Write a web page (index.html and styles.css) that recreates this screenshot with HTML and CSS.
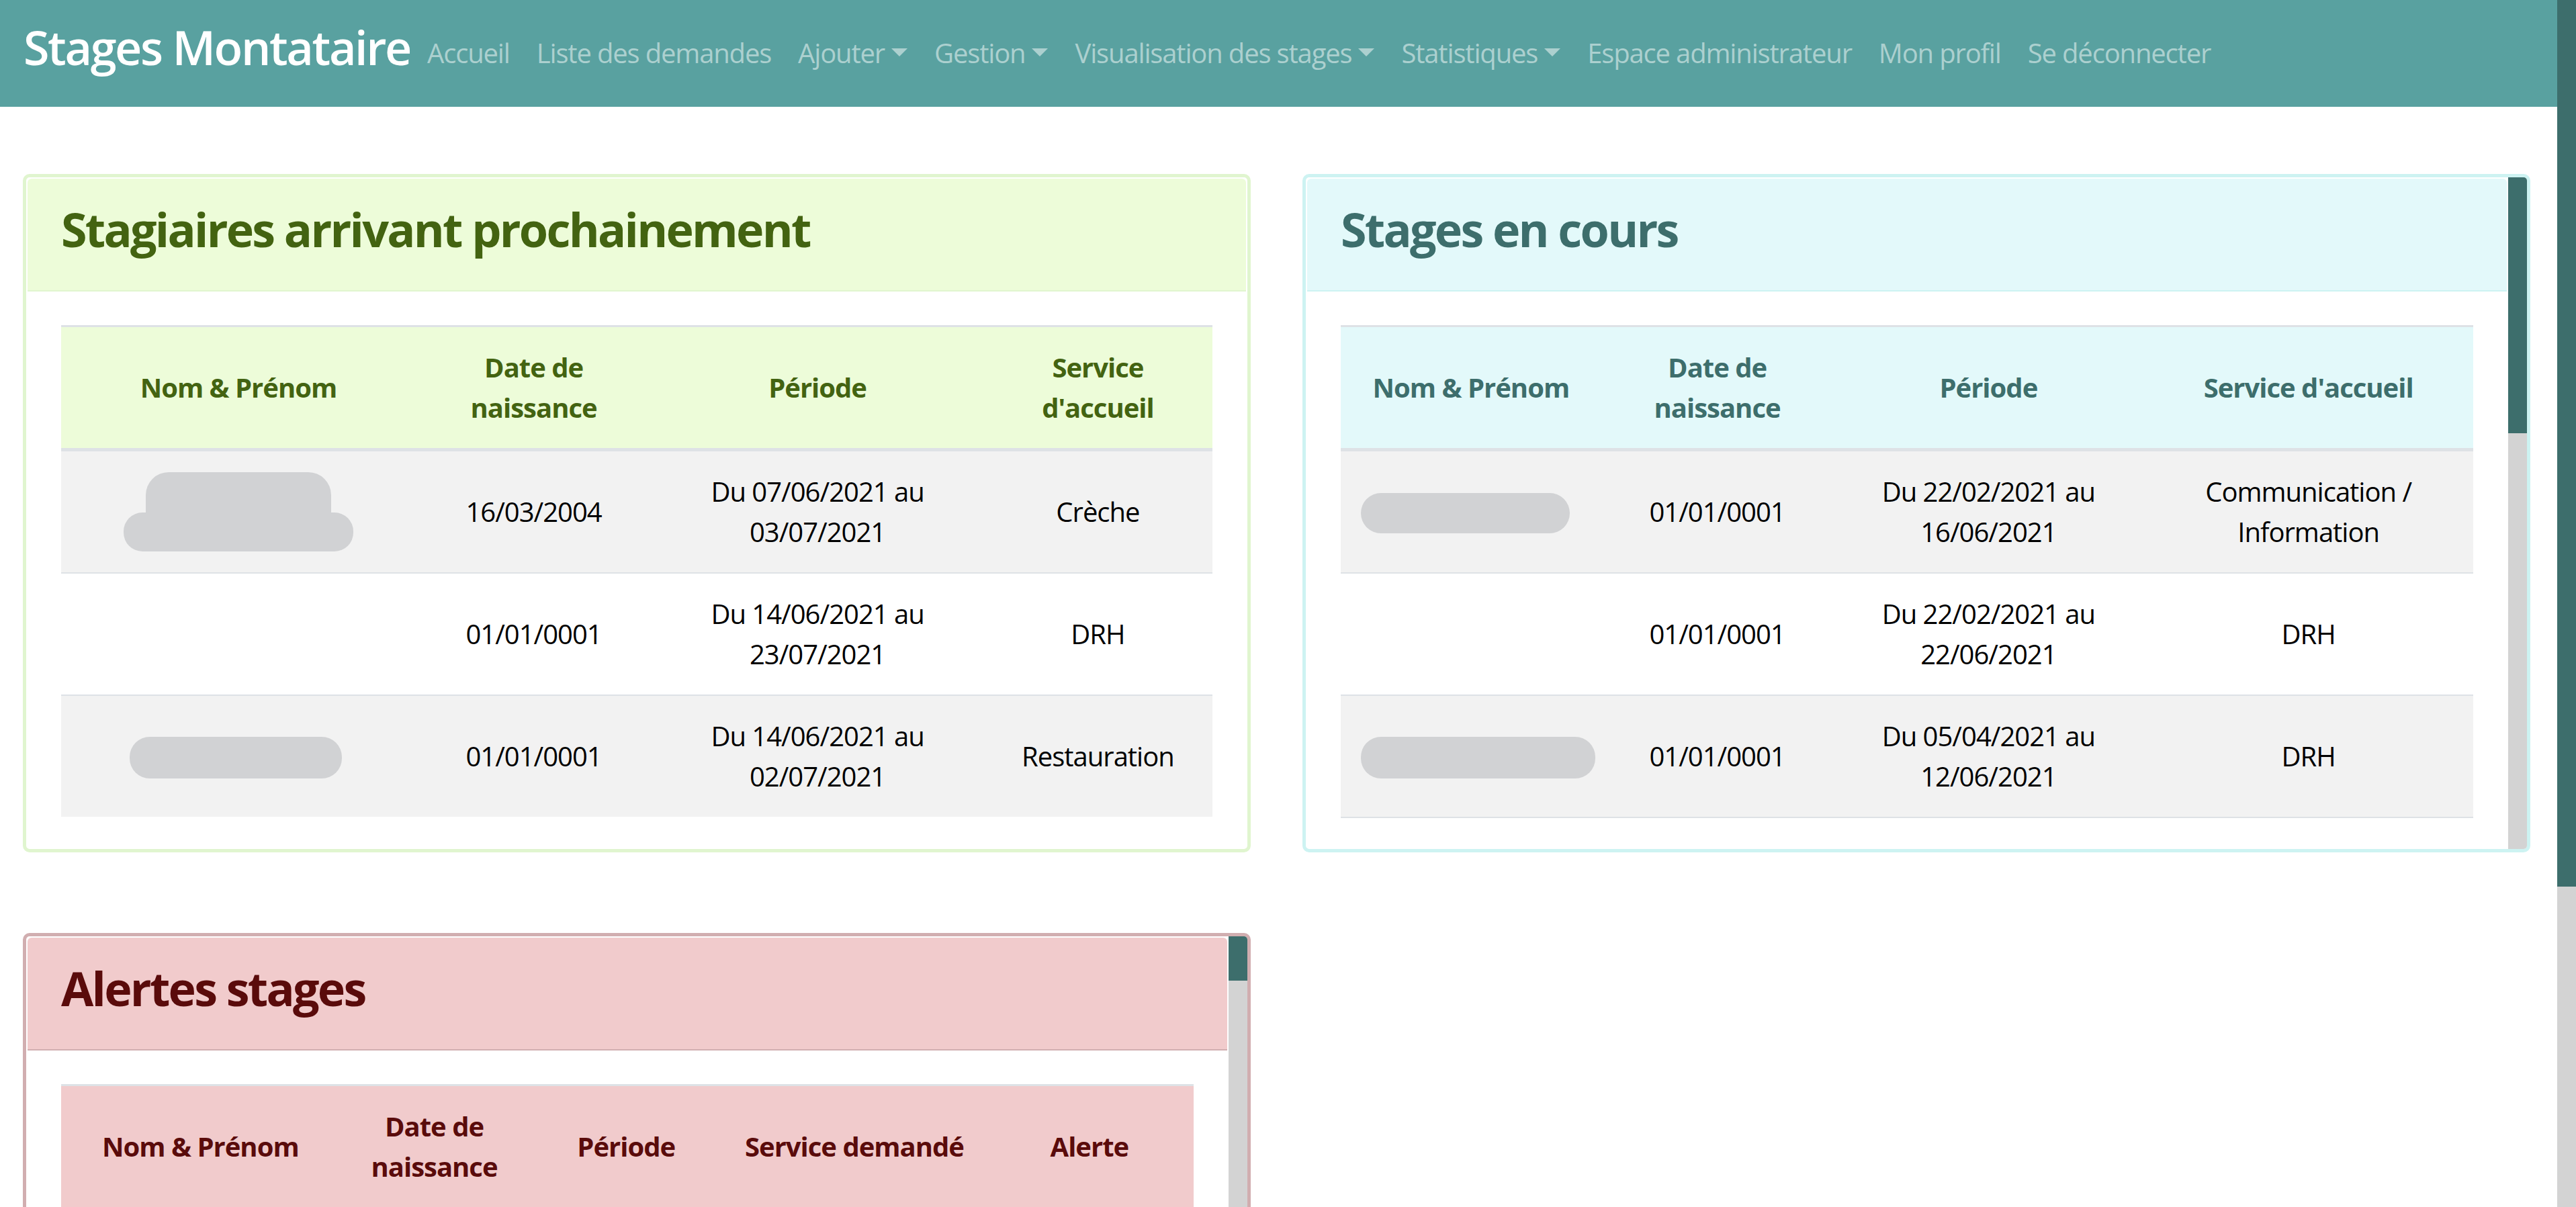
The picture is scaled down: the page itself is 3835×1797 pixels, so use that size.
FILE: index.html
```html
<!DOCTYPE html>
<html lang="fr">
<head>
<meta charset="utf-8">
<title>Stages Montataire</title>
<link rel="stylesheet" href="styles.css">
</head>
<body>
<div class="page">
  <nav class="navbar">
    <a class="brand" href="#">Stages Montataire</a>
    <ul class="nav">
      <li><a class="nav-link" href="#">Accueil</a></li>
      <li><a class="nav-link" href="#">Liste des demandes</a></li>
      <li><a class="nav-link dropdown" href="#">Ajouter</a></li>
      <li><a class="nav-link dropdown" href="#">Gestion</a></li>
      <li><a class="nav-link dropdown" href="#">Visualisation des stages</a></li>
      <li><a class="nav-link dropdown" href="#">Statistiques</a></li>
      <li><a class="nav-link" href="#">Espace administrateur</a></li>
      <li><a class="nav-link" href="#">Mon profil</a></li>
      <li><a class="nav-link" href="#">Se déconnecter</a></li>
    </ul>
  </nav>

  <main class="dashboard">
    <section class="card card-green">
      <div class="card-scroll">
        <div class="card-header"><h3>Stagiaires arrivant prochainement</h3></div>
        <div class="card-body">
          <table class="table table-arrivals">
            <colgroup><col class="c1"><col class="c2"><col class="c3"><col class="c4"></colgroup>
            <thead>
              <tr><th>Nom &amp; Prénom</th><th>Date de naissance</th><th>Période</th><th>Service d'accueil</th></tr>
            </thead>
            <tbody>
              <tr><td><span class="blob-stack"><span class="blob blob-top"></span><span class="blob blob-bottom"></span></span></td><td>16/03/2004</td><td>Du 07/06/2021 au 03/07/2021</td><td>Crèche</td></tr>
              <tr><td></td><td>01/01/0001</td><td>Du 14/06/2021 au 23/07/2021</td><td>DRH</td></tr>
              <tr><td><span class="blob blob-316 blob-nudge-s"></span></td><td>01/01/0001</td><td>Du 14/06/2021 au 02/07/2021</td><td>Restauration</td></tr>
            </tbody>
          </table>
        </div>
      </div>
    </section>

    <section class="card card-teal">
      <div class="card-scroll">
        <div class="card-header"><h3>Stages en cours</h3></div>
        <div class="card-body">
          <table class="table table-current">
            <colgroup><col class="c1"><col class="c2"><col class="c3"><col class="c4"></colgroup>
            <thead>
              <tr><th>Nom &amp; Prénom</th><th>Date de naissance</th><th>Période</th><th>Service d'accueil</th></tr>
            </thead>
            <tbody>
              <tr><td><span class="blob blob-311 blob-nudge-l"></span></td><td>01/01/0001</td><td>Du 22/02/2021 au 16/06/2021</td><td>Communication / Information</td></tr>
              <tr><td></td><td>01/01/0001</td><td>Du 22/02/2021 au 22/06/2021</td><td>DRH</td></tr>
              <tr><td><span class="blob blob-349 blob-nudge-m"></span></td><td>01/01/0001</td><td>Du 05/04/2021 au 12/06/2021</td><td>DRH</td></tr>
            </tbody>
          </table>
        </div>
      </div>
      <div class="scrollbar"><div class="thumb thumb-current"></div></div>
    </section>

    <section class="card card-red">
      <div class="card-scroll">
        <div class="card-header"><h3>Alertes stages</h3></div>
        <div class="card-body">
          <table class="table table-alerts">
            <colgroup><col class="c1"><col class="c2"><col class="c3"><col class="c4"><col class="c5"></colgroup>
            <thead>
              <tr><th>Nom &amp; Prénom</th><th>Date de naissance</th><th>Période</th><th>Service demandé</th><th>Alerte</th></tr>
            </thead>
            <tbody></tbody>
          </table>
        </div>
      </div>
      <div class="scrollbar"><div class="thumb thumb-alerts"></div></div>
    </section>
  </main>
</div>
<div class="page-scrollbar"><div class="thumb thumb-page"></div></div>
</body>
</html>
```

FILE: styles.css
```css
html {
  background: #fff;
}
body {
  display: flex;
  align-items: stretch;
  margin: 0;
  font-family: "Open Sans", "Noto Sans", sans-serif;
  font-size: 40px;
  line-height: 1.5;
  letter-spacing: -0.025em;
  color: #000;
}
.page {
  flex: 1;
  min-width: 0;
}

/* Scrollbars (page and cards) */
.page-scrollbar,
.scrollbar {
  flex: none;
  width: 28px;
  background: #d3d3d3;
}
.thumb {
  background: #3d6e6c;
}
.thumb-page { height: 1320px; }
.thumb-current { height: 381px; }
.thumb-alerts { height: 66px; }

/* Navbar */
.navbar {
  display: flex;
  align-items: flex-start;
  height: 159px;
  box-sizing: border-box;
  padding: 18px 35px 0;
  background: #59a1a0;
}
.brand {
  font-size: 70px;
  font-weight: 600;
  line-height: 1.5;
  letter-spacing: -0.034em;
  color: #fff;
  text-decoration: none;
  white-space: nowrap;
}
.nav {
  display: flex;
  list-style: none;
  margin: 31px 0 0 5px;
  padding: 0;
}
.nav-link {
  display: block;
  padding: 0 20px;
  line-height: 60px;
  letter-spacing: -0.029em;
  color: #acd0cf;
  text-decoration: none;
  white-space: nowrap;
}
.dropdown::after {
  content: "";
  display: inline-block;
  margin-left: 10px;
  vertical-align: 10px;
  border-top: 12px solid #acd0cf;
  border-left: 12px solid transparent;
  border-right: 12px solid transparent;
}

/* Dashboard grid */
.dashboard {
  display: grid;
  grid-template-columns: 1fr 1fr;
  column-gap: 77px;
  row-gap: 120px;
  padding: 100px 40px 47px 34px;
}
.card {
  display: flex;
  max-height: 1010px;
  box-sizing: border-box;
  overflow: hidden;
  border: 5px solid;
  border-radius: 10px;
  background: #fff;
}
.card-scroll {
  flex: 1;
  min-width: 0;
  padding: 2px;
}
.card-header {
  padding: 33px 50px 49px;
  border-bottom: 2px solid;
  border-radius: 6px 6px 0 0;
}
.card-header h3 {
  margin: 0;
  font-size: 70px;
  line-height: 84px;
  font-weight: 700;
  letter-spacing: -0.039em;
}
.card-body {
  padding: 50px 50px 44px;
}

.card-green { border-color: #e0f5cf; }
.card-green .card-header { background: #edfcd9; border-bottom-color: #e0f5cf; }
.card-green h3, .card-green th { color: #436311; }
.card-green thead th { background: #edfcd9; }

.card-teal { border-color: #cdf3f2; }
.card-teal .card-header { background: #e3f9fa; border-bottom-color: #cdf3f2; }
.card-teal h3, .card-teal th { color: #3d6e6c; }
.card-teal thead th { background: #e3f9fa; }

.card-red { border-color: #d1aeb0; }
.card-red .card-header { background: #f1cbcc; border-bottom-color: #d1aeb0; }
.card-red h3, .card-red th { color: #5a0b0b; }
.card-red thead th { background: #f1cbcc; }

/* Tables */
.table {
  width: 100%;
  table-layout: fixed;
  border-collapse: collapse;
}
.table th,
.table td {
  padding: 30px;
  text-align: center;
  vertical-align: middle;
  line-height: 60px;
}
.table th {
  font-weight: 700;
  border-top: 3px solid #dee2e6;
  border-bottom: 5px solid #dee2e6;
}
.table td {
  border-top: 2px solid #dee2e6;
}
.table tbody tr:nth-child(odd) td {
  background: #f2f2f2;
}
.table-current tbody tr:last-child td {
  border-bottom: 2px solid #dee2e6;
}

.table-arrivals .c1 { width: 30.8%; }
.table-arrivals .c2 { width: 20.5%; }
.table-arrivals .c3 { width: 28.8%; }
.table-arrivals .c4 { width: 19.9%; }

.table-current .c1 { width: 23%; }
.table-current .c2 { width: 20.5%; }
.table-current .c3 { width: 27.4%; }
.table-current .c4 { width: 29.1%; }

.table-alerts .c1 { width: 24.6%; }
.table-alerts .c2 { width: 16.7%; }
.table-alerts .c3 { width: 17.2%; }
.table-alerts .c4 { width: 23.1%; }
.table-alerts .c5 { width: 18.4%; }

/* Redacted names */
.blob {
  display: inline-block;
  vertical-align: middle;
  background: #d1d2d4;
  border-radius: 30px;
}
.blob-311 { width: 311px; height: 60px; }
.blob-316 { width: 316px; height: 62px; }
.blob-349 { width: 349px; height: 62px; }
.blob-nudge-s { margin-right: 8px; }
.blob-nudge-m { margin-right: 20px; }
.blob-nudge-l { margin-right: 26px; }
.blob-stack {
  display: inline-flex;
  flex-direction: column;
  align-items: center;
  vertical-align: middle;
}
.blob-top {
  width: 276px;
  height: 64px;
  border-radius: 34px 34px 0 0;
}
.blob-bottom {
  width: 342px;
  height: 58px;
  margin-top: -4px;
  border-radius: 28px;
}
```
